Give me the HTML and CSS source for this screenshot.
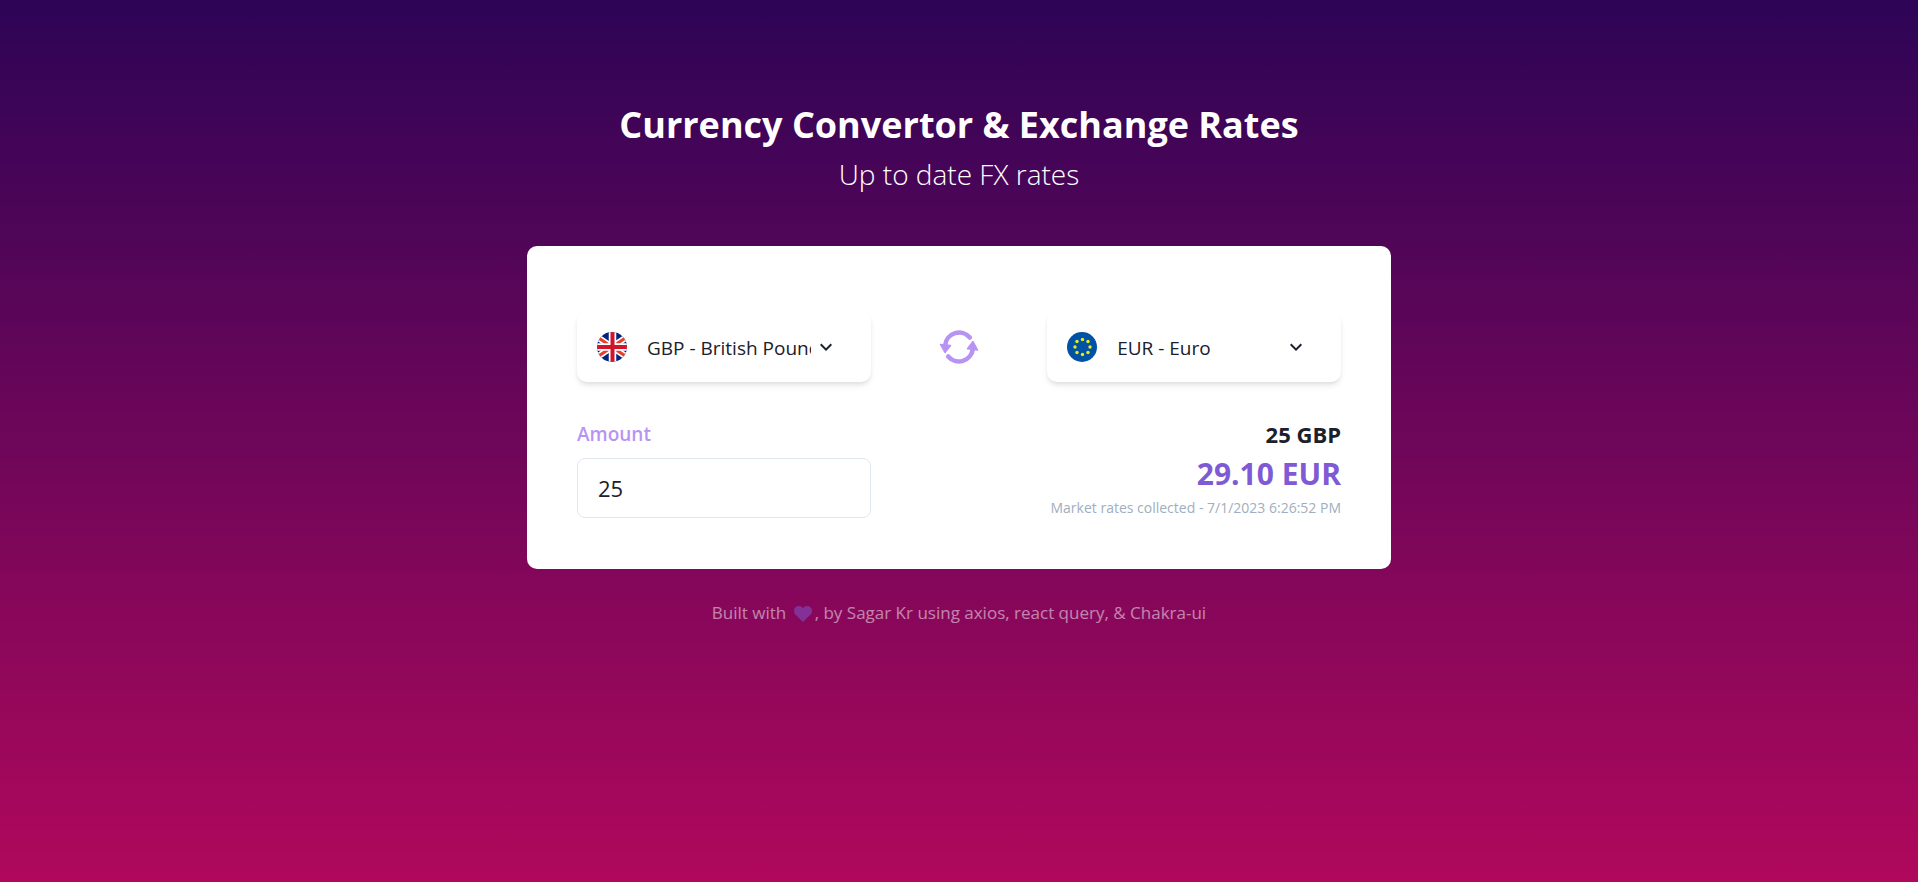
FILE: index.html
```html
<!DOCTYPE html>
<html lang="en">
<head>
<meta charset="utf-8">
<meta name="viewport" content="width=device-width, initial-scale=1">
<title>Currency Convertor</title>
<link rel="stylesheet" href="styles.css">
</head>
<body>
<main class="page">
  <header class="intro">
    <h1 class="title">Currency Convertor &amp; Exchange Rates</h1>
    <p class="subtitle">Up to date FX rates</p>
  </header>

  <form class="card">
    <div class="pair">
      <div class="picker">
        <svg class="flag" viewBox="0 0 30 30" aria-hidden="true">
          <defs><clipPath id="disc"><circle cx="15" cy="15" r="15"/></clipPath></defs>
          <g clip-path="url(#disc)">
            <rect width="30" height="30" fill="#00247d"/>
            <path d="M-5 1.500 35 28.500M35 1.500-5 28.500" stroke="#fff" stroke-width="6.500"/>
            <path d="M-5 1.500 35 28.500M35 1.500-5 28.500" stroke="#e8402a" stroke-width="3"/>
            <path d="M15.500 0V30M0 15H30" stroke="#fff" stroke-width="7.500"/>
            <path d="M15.500 0V30M0 15H30" stroke="#cf142b" stroke-width="4"/>
          </g>
        </svg>
        <div class="select-wrap">
          <select class="select" aria-label="From currency">
            <option>GBP - British Pound Sterling</option>
            <option>EUR - Euro</option>
          </select>
          <svg class="chevron" viewBox="0 0 24 24" aria-hidden="true"><path fill="currentColor" d="M16.590 8.590 12 13.170 7.410 8.590 6 10l6 6 6-6z"/></svg>
        </div>
      </div>

      <button class="swap" type="button" aria-label="Swap currencies">
        <svg class="swap-icon" viewBox="0 0 40 40" aria-hidden="true">
          <g fill="none" stroke="currentColor" stroke-width="4.600" stroke-linecap="round">
            <path d="M30.800 10.500A14 14 0 0 0 6.200 18"/>
            <path d="M9.200 29.500A14 14 0 0 0 33.800 22"/>
          </g>
          <path fill="currentColor" stroke="currentColor" stroke-width="1.500" stroke-linejoin="round" d="M1.500 17.500 11.500 18.500 6 25.500zM28.500 21.800 34 14.500 38.500 23z"/>
        </svg>
      </button>

      <div class="picker">
        <svg class="flag" viewBox="0 0 30 30" aria-hidden="true">
          <circle cx="15" cy="15" r="15" fill="#0052a5"/>
          <g fill="#ecec12">
            <circle cx="15.500" cy="7.500" r="1.700"/><circle cx="21" cy="9.500" r="1.700"/>
            <circle cx="23" cy="15" r="1.700"/><circle cx="21" cy="20.500" r="1.700"/>
            <circle cx="15.500" cy="22.500" r="1.700"/><circle cx="10" cy="20.500" r="1.700"/>
            <circle cx="8" cy="15" r="1.700"/><circle cx="10" cy="9.500" r="1.700"/>
          </g>
        </svg>
        <div class="select-wrap">
          <select class="select" aria-label="To currency">
            <option>EUR - Euro</option>
            <option>GBP - British Pound Sterling</option>
          </select>
          <svg class="chevron" viewBox="0 0 24 24" aria-hidden="true"><path fill="currentColor" d="M16.590 8.590 12 13.170 7.410 8.590 6 10l6 6 6-6z"/></svg>
        </div>
      </div>
    </div>

    <div class="conversion">
      <div class="field">
        <label class="label" for="amount">Amount</label>
        <input class="input" id="amount" type="text" inputmode="decimal" value="25">
      </div>
      <div class="result">
        <p class="source">25 GBP</p>
        <p class="target">29.10 EUR</p>
        <p class="stamp">Market rates collected - 7/1/2023 6:26:52 PM</p>
      </div>
    </div>
  </form>

  <footer class="footer">Built with <svg class="heart" viewBox="0 0 18 16" role="img" aria-label="love"><path fill="#805ad5" d="M9 16 1.500 8.600C-.6 6.400-.4 3 1.500 1.300 3.700-.6 7.200-.4 9 2.400c1.800-2.800 5.300-3 7.500-1.100 1.900 1.700 2.100 5.100 0 7.300z"/></svg>, by Sagar Kr using axios, react query, &amp; Chakra-ui</footer>
</main>
</body>
</html>
```
FILE: styles.css
```css
* {
  box-sizing: border-box;
}

body {
  margin: 0;
  min-height: 100vh;
  background: linear-gradient(#2d0456, #b0085c);
  color: #1a202c;
  font-family: "Segoe UI", "Open Sans", "Noto Sans", sans-serif;
  font-size: 20px;
  line-height: 30px;
}

h1,
p {
  margin: 0;
}

.page {
  max-width: 864px;
  margin: 0 auto;
  padding-top: 100px;
}

.intro {
  color: #fff;
  text-align: center;
}

.title {
  font-size: 36px;
  font-weight: 700;
  line-height: 50px;
}

.subtitle {
  font-size: 28px;
  font-weight: 300;
  line-height: 48px;
}

.card {
  margin-top: 48px;
  padding: 66px 50px 51px;
  border-radius: 10px;
  background: #fff;
}

.pair {
  display: grid;
  grid-template-columns: 5fr 3fr 5fr;
  align-items: center;
}

.picker {
  display: flex;
  align-items: center;
  gap: 20px;
  height: 70px;
  padding: 0 20px;
  border-radius: 10px;
  box-shadow: 0 4px 6px -1px rgba(0, 0, 0, 0.1), 0 2px 4px -1px rgba(0, 0, 0, 0.06);
}

.flag {
  flex: none;
  width: 30px;
  height: 30px;
}

.select-wrap {
  position: relative;
  flex: 1;
  min-width: 0;
}

.select {
  display: block;
  width: 100%;
  height: 40px;
  padding: 2px 40px 0 0;
  border: 0;
  appearance: none;
  background: transparent;
  color: inherit;
  font: inherit;
  font-size: 19px;
}

.chevron {
  position: absolute;
  top: 8px;
  right: 13px;
  width: 24px;
  height: 24px;
  pointer-events: none;
}

.swap {
  display: flex;
  justify-self: center;
  padding: 0;
  border: 0;
  background: none;
  color: #b794f4;
}

.swap-icon {
  width: 40px;
  height: 40px;
}

.conversion {
  display: flex;
  justify-content: space-between;
  margin-top: 37px;
}

.field {
  width: 294px;
}

.label {
  display: block;
  margin-bottom: 9px;
  color: #b794f4;
  font-size: 19px;
  font-weight: 600;
}

.input {
  display: block;
  width: 100%;
  height: 60px;
  padding: 0 20px;
  border: 1px solid #e2e8f0;
  border-radius: 8px;
  background: #fff;
  color: inherit;
  font: inherit;
  font-size: 22px;
}

.result {
  text-align: right;
}

.source {
  font-size: 22px;
  font-weight: 700;
}

.target {
  color: #805ad5;
  font-size: 30px;
  font-weight: 700;
  line-height: 49px;
}

.stamp {
  color: #a0aec0;
  font-size: 14px;
  line-height: 20px;
}

.footer {
  margin-top: 29px;
  color: #fff;
  font-size: 17px;
  text-align: center;
  opacity: 0.5;
}

.heart {
  width: 18px;
  height: 16px;
  margin: 0 3px;
  vertical-align: -3px;
}
```
